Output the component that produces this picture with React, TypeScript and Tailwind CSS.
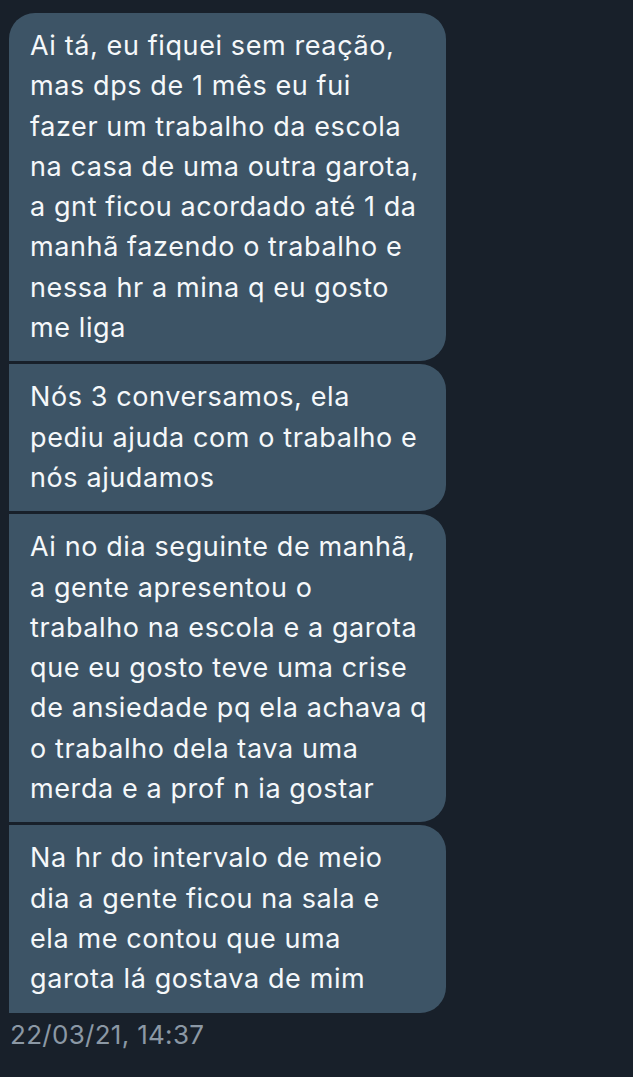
const messages: string[][] = [
  [
    'Ai tá, eu fiquei sem reação,',
    'mas dps de 1 mês eu fui',
    'fazer um trabalho da escola',
    'na casa de uma outra garota,',
    'a gnt ficou acordado até 1 da',
    'manhã fazendo o trabalho e',
    'nessa hr a mina q eu gosto',
    'me liga',
  ],
  ['Nós 3 conversamos, ela', 'pediu ajuda com o trabalho e', 'nós ajudamos'],
  [
    'Ai no dia seguinte de manhã,',
    'a gente apresentou o',
    'trabalho na escola e a garota',
    'que eu gosto teve uma crise',
    'de ansiedade pq ela achava q',
    'o trabalho dela tava uma',
    'merda e a prof n ia gostar',
  ],
  ['Na hr do intervalo de meio', 'dia a gente ficou na sala e', 'ela me contou que uma', 'garota lá gostava de mim'],
];

function Bubble({ lines, first }: { lines: string[]; first: boolean }) {
  return (
    <div
      className={
        'w-[437px] bg-[#3d5466] pl-[21px] pr-3 py-[13px] rounded-r-[26px] ' +
        (first ? 'rounded-tl-[26px]' : '')
      }
    >
      {lines.map((l, i) => (
        <div key={i} className="text-[27px] leading-[40.3px] tracking-[0.6px] text-[#f5f8fa] whitespace-nowrap">
          {l}
        </div>
      ))}
    </div>
  );
}

export default function App() {
  return (
    <div
      className="w-[633px] h-[1077px] bg-[#18202a] pl-[9px] pt-[13px] overflow-hidden"
      style={{ fontFamily: 'Inter, "Noto Sans", sans-serif' }}
    >
      <div className="flex flex-col gap-[3px]">
        {messages.map((m, i) => (
          <Bubble key={i} lines={m} first={i === 0} />
        ))}
      </div>
      <div className="mt-[5px] pl-[1px] text-[26px] leading-[34px] tracking-[0.3px] text-[#8b98a5]">22/03/21, 14:37</div>
    </div>
  );
}
